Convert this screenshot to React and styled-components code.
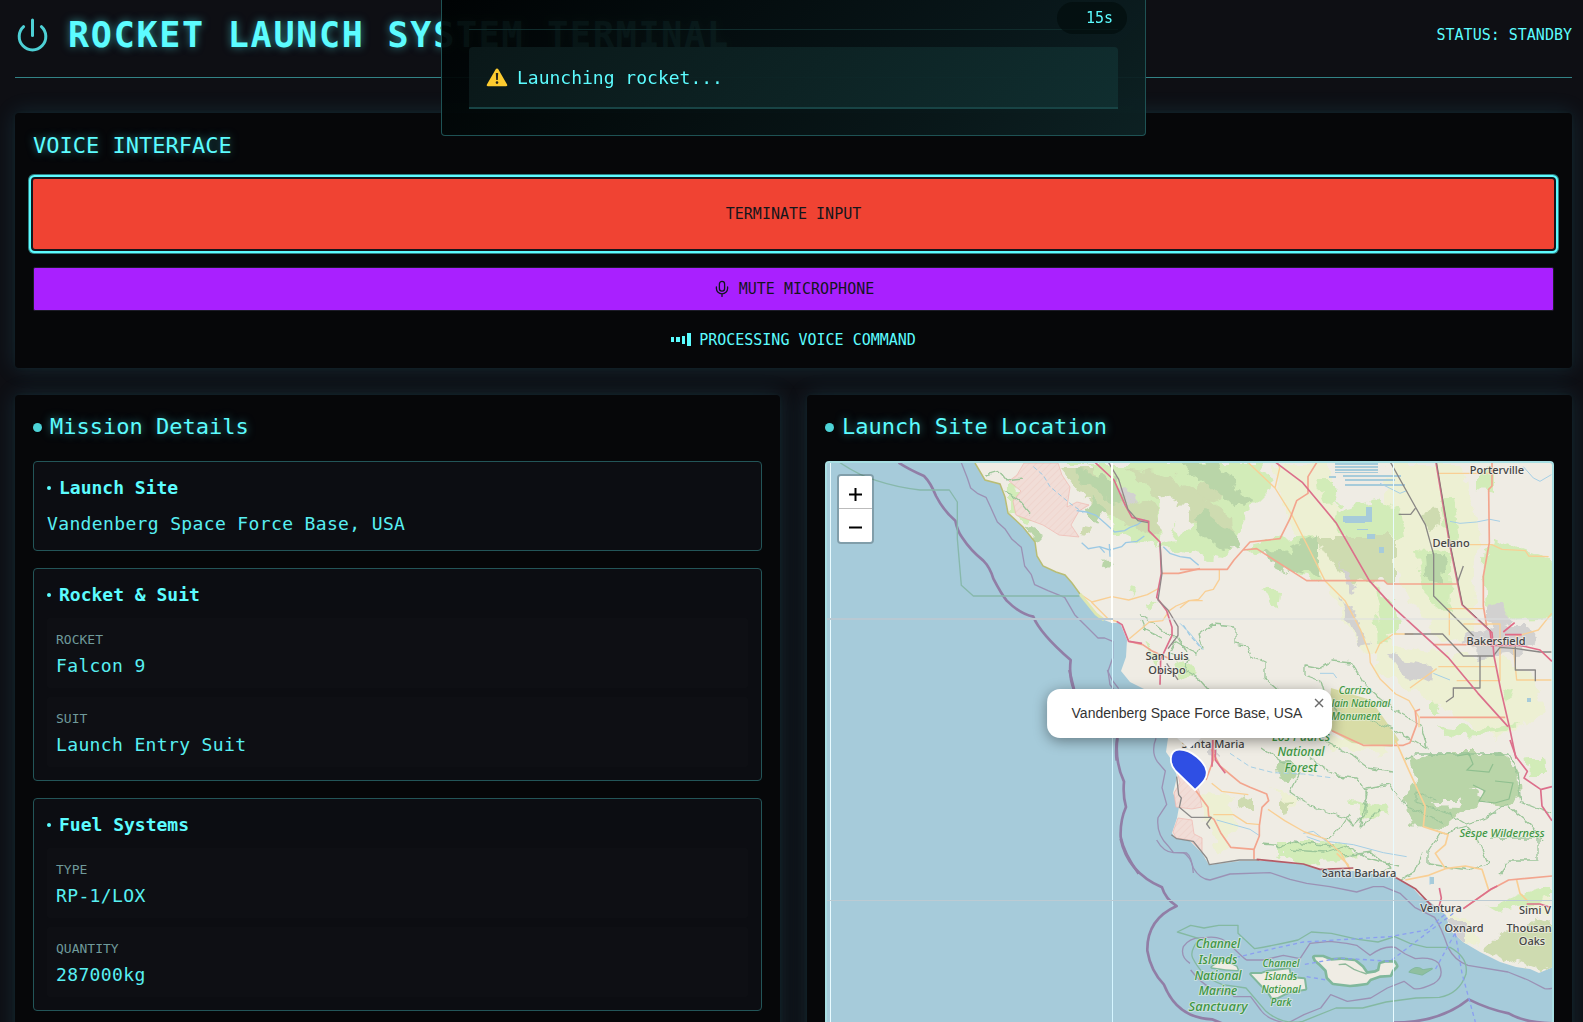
import React from "react";
import styled, { createGlobalStyle } from "styled-components";

const mono = '"DejaVu Sans Mono", "Liberation Mono", monospace';
const cyan = "#5cfcff";
const glow = "0 0 9px rgba(77, 230, 235, 0.55)";

const GlobalStyle = createGlobalStyle`
  * { box-sizing: border-box; }
  html, body { height: 100%; margin: 0; overflow: hidden; background: #0e0f14; }
  button { font: inherit; margin: 0; cursor: pointer; }
`;

const Page = styled.div`
  min-height: 100vh;
  padding: 9px 11px 27px 15px;
  background: #0e0f14;
  color: ${cyan};
  font-family: ${mono};
  font-size: 15px;
  line-height: 26px;
`;

const Header = styled.header`
  display: flex;
  align-items: center;
  justify-content: space-between;
  padding-bottom: 16px;
  margin-bottom: 35px;
  border-bottom: 1px solid #328386;
`;

const Brand = styled.div`
  display: flex;
  align-items: center;
  gap: 18px;
`;

const Title = styled.h1`
  margin: 0;
  font-size: 35px;
  line-height: 52px;
  letter-spacing: 0.05em;
  white-space: nowrap;
  text-shadow: ${glow};
`;

const Panel = styled.section`
  padding: 18px;
  min-width: 0;
  border-radius: 4px;
  background: #060709;
  box-shadow: 0 0 22px rgba(64, 180, 220, 0.16), 0 0 5px rgba(64, 220, 200, 0.05);
`;

const VoicePanel = styled(Panel)`
  display: flex;
  flex-direction: column;
  gap: 18px;
  margin-bottom: 27px;
`;

const Heading = styled.h2`
  display: flex;
  align-items: center;
  gap: 8px;
  margin: 0;
  font-size: 22px;
  font-weight: 400;
  line-height: ${(p) => (p.$tall ? "30px" : "28px")};
  text-shadow: ${glow};
`;

const Dot = styled.span`
  flex: none;
  width: ${(p) => p.$size}px;
  height: ${(p) => p.$size}px;
  border-radius: 50%;
  background: ${(p) => (p.$size > 5 ? "#4dd3d7" : cyan)};
`;

const ActionButton = styled.button`
  display: flex;
  align-items: center;
  justify-content: center;
  gap: 8px;
  width: 100%;
  color: #14161c;
  border-radius: 2px;
`;

const TerminateButton = styled(ActionButton)`
  height: 70px;
  border: 0;
  background: #f04333;
  box-shadow: 0 0 0 2px #14161c, 0 0 0 4px ${cyan}, 0 0 0 5px rgba(77, 211, 215, 0.6);
`;

const MuteButton = styled(ActionButton)`
  height: 44px;
  border: 1px solid #1d1c29;
  background: #a920ff;
`;

const VoiceStatus = styled.div`
  display: flex;
  align-items: center;
  justify-content: center;
  gap: 8px;
  padding-top: 1px;
  line-height: 20px;
`;

const Columns = styled.div`
  display: grid;
  grid-template-columns: minmax(0, 1fr) minmax(0, 1fr);
  gap: 27px;
`;

const Stack = styled.div`
  display: flex;
  flex-direction: column;
  gap: 17px;
  margin-top: 20px;
`;

const Card = styled.article`
  display: flex;
  flex-direction: column;
  padding: 13px;
  border: 1px solid #235558;
  border-radius: 4px;
  background: #0c0d12;
`;

const CardTitle = styled.h3`
  display: flex;
  align-items: center;
  gap: 8px;
  margin: 0 0 10px;
  font-size: 18px;
  line-height: 26px;
`;

const Value = styled.div`
  font-size: 18px;
  line-height: 26px;
  letter-spacing: 0.02em;
  color: #58eff2;
`;

const Fields = styled.div`
  display: flex;
  flex-direction: column;
  gap: 9px;
`;

const Field = styled.div`
  padding: 9px;
  border-radius: 2px;
  background: #0e0f14;
`;

const FieldLabel = styled.div`
  font-size: 13px;
  line-height: 26px;
  color: #6f9a9b;
`;

const Toast = styled.aside`
  position: fixed;
  z-index: 10;
  top: 0;
  left: 15px;
  right: 11px;
  width: min(705px, 100% - 26px);
  margin: 0 auto;
  padding: 0 27px 26px;
  border: 1px solid #1e5254;
  border-top: 0;
  border-radius: 0 0 4px 4px;
  background: linear-gradient(135deg, rgba(0, 3, 3, 0.95), rgba(9, 24, 26, 0.95) 72%, rgba(13, 34, 36, 0.96));
`;

const ToastTop = styled.div`
  height: 30px;
  margin-bottom: 17px;
  border-bottom: 1px solid #102c2c;
`;

const Timer = styled.div`
  position: absolute;
  top: 2px;
  right: 18px;
  width: 70px;
  padding: 3px 14px;
  border-radius: 16px;
  text-align: right;
  background: rgba(2, 12, 12, 0.65);
`;

const ToastMessage = styled.div`
  display: flex;
  align-items: center;
  gap: 9px;
  padding: 18px 17px 16px;
  border-bottom: 2px solid #184445;
  border-radius: 4px 4px 0 0;
  background: linear-gradient(135deg, rgba(12, 28, 29, 0.8), rgba(17, 50, 51, 0.8));
  font-size: 18px;
`;

const MapFrame = styled.div`
  position: relative;
  height: 620px;
  margin-top: 20px;
  overflow: hidden;
  border: 2px solid #a8dfe3;
  border-radius: 4px;
  background: #a6cbda;
`;

const MapSvg = styled.svg`
  display: block;
  width: 100%;
  height: 100%;
`;

const ZoomControl = styled.div`
  position: absolute;
  top: 11px;
  left: 10px;
  overflow: hidden;
  border: 2px solid rgba(0, 0, 0, 0.22);
  border-radius: 4px;
  background-clip: padding-box;
`;

const ZoomButton = styled.button`
  display: flex;
  align-items: center;
  justify-content: center;
  width: 33px;
  height: 33px;
  padding: 4px 0 0;
  border: 0;
  border-bottom: ${(p) => (p.$divided ? "1px solid #bbb" : "0")};
  background: #fff;
`;

const Callout = styled.div`
  position: absolute;
  top: 226px;
  left: 50%;
  display: flex;
  flex-direction: column;
  align-items: center;
  transform: translateX(-50%);
`;

const Bubble = styled.div`
  position: relative;
  padding: 0 30px 0 25px;
  border-radius: 13px;
  background: #fff;
  box-shadow: 0 3px 14px rgba(0, 0, 0, 0.4);
  color: #333;
  font-family: "Liberation Sans", Arial, sans-serif;
  font-size: 14px;
  line-height: 49px;
  white-space: nowrap;
`;

const CloseButton = styled.button`
  position: absolute;
  top: 1px;
  right: 0;
  display: flex;
  align-items: center;
  justify-content: center;
  width: 26px;
  height: 26px;
  padding: 0;
  border: 0;
  background: transparent;
`;

const Pointer = styled.svg`
  display: block;
`;

function PowerIcon() {
  return (
    <svg width="35" height="35" viewBox="0 0 35 35" fill="none" stroke="#4dd0d5" strokeWidth="3" strokeLinecap="round" aria-hidden="true">
      <path d="M17.5 2v15.5" />
      <path d="M8.6 8.700a13.300 13.300 0 1 0 17.800 0" />
    </svg>
  );
}

function MicIcon() {
  return (
    <svg width="18" height="18" viewBox="0 0 18 18" fill="none" stroke="currentColor" strokeWidth="1.3" strokeLinecap="round" aria-hidden="true">
      <rect x="6.4" y="1.4" width="5.2" height="9.8" rx="2.6" />
      <path d="M3.4 7v1.6a5.6 5.2 0 0 0 11.2 0V7M9 13.8v2.6" />
    </svg>
  );
}

function BarsIcon() {
  return (
    <svg width="20" height="14" viewBox="0 0 20 14" fill={cyan} aria-hidden="true">
      <path d="M0 4h3v5H0zM5 4h4v5H5zM11 3h3v8h-3zM16 0h4v13h-4z" />
    </svg>
  );
}

function WarningIcon() {
  return (
    <svg width="22" height="20" viewBox="0 0 22 20" role="img" aria-label="Warning">
      <path d="M11 .4c.6 0 1 .4 1.3.9l8.8 15.2c.5.9 0 1.7-1 1.7H1.900c-1 0-1.500-.8-1-1.700L9.700 1.300c.3-.5.7-.9 1.300-.9z" fill="#fccb2f" />
      <path d="M9.800 5h2.400l-.4 7h-1.600z" fill="#26231b" />
      <circle cx="11" cy="14.600" r="1.300" fill="#26231b" />
    </svg>
  );
}

/* Map drawing. Each sector is traced on a 3x grid from its own origin. */
const Sector = ({ x, y, children }) => <g transform={`translate(${x} ${y}) scale(0.33333)`}>{children}</g>;

const COAST =
  "M975 463 985 480 1000 484 1005 497 1008 513 1023 527 1035 542 1037 556 1043 566 1056 572 1065 575 1072 583 1080 594 1096 614 1104 620 1112 623 1120 623 1127 640 1126 657 1121 671 1130 682 1144 689 1160 700 1172 718 1168 738 1166 752 1173 762 1177 777 1173 793 1179 807 1177 818 1172 833 1175 838 1190 841 1202 853 1209 865 1240 861 1273 861 1290 863 1303 864 1320 869 1353 871 1395 877 1413 888 1420 896 1430 902 1446 915 1450 930 1463 942 1480 952 1500 962 1516 967 1530 969 1539 973 1553 967";

const TOWNS = [
  [1167, 660, "San Luis"], [1167, 674, "Obispo"], [1213, 748, "Santa Maria"], [1497, 474, "Porterville"],
  [1451, 547, "Delano"], [1496, 645, "Bakersfield"], [1359, 877, "Santa Barbara"], [1441, 912, "Ventura"],
  [1464, 932, "Oxnard"], [1535, 914, "Simi V"], [1529, 932, "Thousan"], [1532, 945, "Oaks"],
];

const PARKS = [
  [1355, 694, 10, "Carrizo"], [1358, 707, 10, "Plain National"], [1356, 720, 10, "Monument"],
  [1301, 741, 12, "Los Padres"], [1301, 756, 12, "National"], [1301, 772, 12, "Forest"],
  [1502, 837, 11, "Sespe Wilderness"],
  [1218, 948, 12, "Channel"], [1218, 964, 12, "Islands"], [1218, 980, 12, "National"], [1218, 995, 12, "Marine"], [1218, 1011, 13, "Sanctuary"],
  [1281, 967, 10, "Channel"], [1281, 980, 10, "Islands"], [1281, 993, 10, "National"], [1281, 1006, 10, "Park"],
];

function CoastMap() {
  return (
    <MapSvg viewBox="827 463 725 616" preserveAspectRatio="xMidYMin slice" role="img" aria-label="Map of the launch site">
      <defs>
        <filter id="rough" x="-5%" y="-5%" width="110%" height="110%">
          <feTurbulence type="fractalNoise" baseFrequency="0.07" numOctaves="3" seed="4" />
          <feDisplacementMap in="SourceGraphic" scale="17" xChannelSelector="R" yChannelSelector="G" />
        </filter>
        <filter id="edge">
          <feTurbulence type="fractalNoise" baseFrequency="0.13" numOctaves="2" seed="9" />
          <feDisplacementMap in="SourceGraphic" scale="6" xChannelSelector="R" yChannelSelector="G" />
        </filter>
        <pattern id="hatch" width="5" height="5" patternUnits="userSpaceOnUse" patternTransform="rotate(45)">
          <rect width="5" height="5" fill="#f1ddd7" />
          <path d="M0 0v5" stroke="#edcdc6" strokeWidth="1" />
        </pattern>
        <clipPath id="land"><path d={`${COAST}V463z`} /></clipPath>
      </defs>

      <rect x="827" y="463" width="725" height="616" fill="#a6cbda" />
      <path d={`${COAST}V463z`} fill="#efece4" />

      <g clipPath="url(#land)">
        <g filter="url(#rough)">
          {/* valley farmland */}
          <g fill="#edf0d3">
            <path d="M1270 463l60 0 10 60 30 50 20 38 0 50-30-12-30-60-40-70zM1390 463l70 0 20 70-10 100-30 10-40-60-20-70z" />
            <path d="M1375 645l60 10 60 0 40 20 10 40-50 25-50-30-70-40zM1440 595l30 0 5 40-25 5zM1320 738l60-5 10 22-50-5z" />
            <path d="M1200 790l30 5 5 30-15 30-15-40zM1270 790l30 10-8 10zM1520 900l30-5 0 20-30-5z" />
            <path d="M1450 915l18 2 10 30-18-8z" />
          </g>
          {/* hills and grassland */}
          <g fill="#d2ecb8">
            <path d="M1057 463l205 0 10 25-25 25-10 25-14 20-16-2-32-8-25-5-20-4-22-14-14-45-12-25-20-5-10-12z" />
            <path d="M1246 546l30-8 43-2 3 48-18-6-52-28z" />
            <path d="M1335 510l40-10 25 10 5 25-55 5-16-15zM1485 547l15-4 27 10 30 5v60l-35 2-36-14-3-30z" />
            <path d="M1318 480l16 0 6 24-16 4zM1374 590l20 12 4 26-14 6z" />
            <path d="M1262 590l18 3-2 14-10-6zM1480 470l14 2 0 18-14-2zM1374 610l16 30-14 5zM1528 758l16 0 2 16-16 0z" />
            <path d="M1350 800l40 10-20 12zM1280 842l60 0 20 15-60 6-20-8zM1490 907l30-12 30-8v10l-50 16z" />
            <path d="M1145 640l20 18-10 10zM1175 655l20 20-15 5zM1415 550l38 2-3 60-28-20zM1440 500l14 0 6 40-14 4z" />
            <path d="M1010 482l20 10 10 22-14 8-16-12zM1130 590l8 2-4 6zM1150 600l10 6-8 4z" />
            <path d="M1437 725l40 4 40-4-10 8-60 4zM1430 700l8 10-8 4zM1500 690l10 2-4 10z" />
          </g>
          {/* scrub */}
          <g fill="#cedbb0">
            <path d="M1060 468l30 0 30 28 35 10 10 30-25-5-45-22zM1180 500l20-18 20 2 5 10-30 20zM1317 537l78 0 0 45-46-2-20-22z" />
            <path d="M1126 468l45 8 60 42 2 18-50-14zM1240 795l10 3 0 14-12-8zM1280 803l12-2 0 12-12 2zM1422 512l14-3 4 16-12 4z" />
            <path d="M1484 950l20-18 20-5 30-5v42l-14 8-30-10zM1084 525l10 2-2 8-10-2z" />
          </g>
          {/* forest */}
          <g fill="#b9d5a8">
            <path d="M1075 468l30 6 22 24-14 4-30-18zM1180 464l40 0 15 25 20 15-20 4-30-26zM1192 518l15-6 20 16 12 20-15 2-27-18z" />
            <path d="M1092 500l12 10-6 10-12-8zM1290 545l30-10 0 42-26-8zM1262 555l30-2 12 22-30-8zM1422 555l25 0-4 28-20-8z" />
            <path d="M1410 758l30-6 60 0 18 14 2 30-18 12-15-6-25 8-22 20-30-4-8-30 12-14zM1280 765l18 0-8 18-16-8z" />
            <path d="M1482 790l36-6 4 14-30 8zM1022 524l22 12-8 8zM1100 560l10 4-4 4z" />
          </g>
          <g fill="#efece4">
            <path d="M1430 800l34 0-8 6-24-1zM1470 790l14 0-3 6zM1160 492l20 8-8 40-14 4zM1174 510l14-4 2 24-12 8z" />
          </g>
          {/* built up areas */}
          <g fill="#d2d1d0">
            <path d="M1487 607l14-4 14 20-16 6-12-8zM1465 637l30-10 34 0 8 12-16 14-44 6zM1340 600l12 6 20 40-12 2-10-24z" />
            <path d="M1390 655l42 10-2 16-26-6zM1338 560l20 28-6 3zM1452 920l12 0 0 20-10-4zM1120 492l7-4 8 12-7 4zM1208 742l8 0 0 14-8-4z" />
          </g>
        </g>
        <path d="M1331 688l40 12 28 40-7 7-40-4-24-14z" fill="#d8dca6" />
      </g>

      {/* restricted zones */}
      <g fill="url(#hatch)" stroke="#efb8b0" strokeWidth="0.7">
        <path d="M1024 463h34l4 12 8 12-3 20 10-5 12 3-10 6-8 14 8 12-20-2-16-10-27-10-3-14 8-10-12-10 8-6z" />
        <path d="M1175 763l14 6 10 22 3 16-10 2-16-2-2-14 6-10zM1178 818l14 2 2 14 8 4v14l-12-12-14-2-3-6z" />
      </g>

      {/* lake bed and reservoirs */}
      <g fill="#a6cbda">
        <path d="M1335 463h43v2h-43zM1335 466h43v2h-43zM1335 469h43v2h-43zM1335 472h43v1h-43zM1343 475h58v2h-58zM1329 476h7v2h-7zM1345 479h50v2h-50zM1345 484h60v2h-60zM1343 516h28v6h-28zM1345 522h20v1h-20zM1366 507h6v15h-6zM1357 529h11v1h-11zM1367 534h8v5h-8zM1379 547h5v6h-5zM1430 877h4v7h-4zM1527 698h4v4h-4z" />
      </g>

      {/* trails and park limits */}
      <g filter="url(#edge)" fill="none" stroke="#9cc69a" strokeWidth="1.3" strokeLinejoin="round">
        <path d="M1213 624l22 2 0 18 12 2 4 10 14 6 0 16 14 12-8 6-60-3-12-14-14-8 4-10-20-8 6-12 20 12 8-6-4-12z" />
        <path d="M1305 665l16 3 12-7 18 2 14 22 28 24 28 16 6 24-24-14-10-6-24-10-28-4-16-20-4-14-16-6z" />
        <path d="M1262 748l20 14 10 0M1300 772l-10 20 20 14 36 12 8 8 12-12 0-26 24-4 14 20 40 20M1310 758l26 18 20 2 12 16-8 34 20-20" />
        <path d="M1322 740l28 14 18 14 24 4M1325 842l16-16 8-12" />
        <path d="M1140 614l12 8 14 12 12 4 8 14M1142 620l4 10 16 8" />
        <path d="M1263 844l20 2 10-4 40 4 12 10 26-4 20 16-14 8M1290 850l34 2 20-6 24 12 30 8" />
        <path d="M1405 760l10-6 94 0 8 18 4 30 30 12M1436 800l-20-8 0 10 30 10 20 12 20-6 20-14 24 20 12 16" />
        <path d="M1440 834l26-8 12 14 10 24-20 6-40-6 0-12zM1490 838l48 0 0 22-28 0-10 14M1400 880l14-8 8-20" />
        <path d="M985 475l14-4 8 10 16-2M1004 490l16 12 10 12" />
      </g>
      <g fill="none" stroke="#6f9f8d" strokeWidth="1.2">
        <path d="M1457 756l12-2 4 10-6 6 22 2 4-8M1473 785l12 6-6 10 16 2 14-4 4-16-18-2" stroke="#8fbf8f" />
      </g>

      {/* streams */}
      <Sector x={820} y={460}>
        <g fill="none" stroke="#9cc9e4" strokeWidth="4">
          <path d="M770 152l30 4 28 10 30 26 26 24 30-4 16-10 22-8 22-16M785 248l20 18 34-6 30 10 36-10 12-12 34-4 22-16M868 252l2 38M840 262l14 16M1030 260l20 20 30 10 30 4 26 22" />
          <path d="M640 20l30 26 20 34 60 50 40 28" strokeDasharray="14 8" strokeWidth="3" />
          <path d="M1090 496l20 30 30 34" strokeDasharray="14 8" />
        </g>
      </Sector>
      <Sector x={1180} y={740}>
        <g fill="none" stroke="#a5cfe6" strokeWidth="3">
          <path d="M150 40l60 40 70 18 90 4 90 12" strokeDasharray="16 9" />
          <path d="M370 280l30-6 40 30 80 10 90 24 70 12M380 290l40 14M110 240l50 14 50 14 30 20M750 410v24" />
        </g>
      </Sector>
      <Sector x={1180} y={460}>
        <g fill="none" stroke="#a5cfe6" strokeWidth="3">
          <path d="M810 184l30 6 50-4 40-8 30 6M0 490l30 30 40 50M1030 20l30 34 20 10 34-20M760 640l50 20M420 640h40l10 14M600 70l60 30 20-8" />
        </g>
      </Sector>

      {/* roads */}
      <Sector x={1180} y={460}>
        <g fill="none" strokeLinejoin="round">
          <g stroke="#f9cf94" strokeWidth="4">
            <path d="M205 8l80 76 50 80 50 98 50 100 60 60 46 86 28 74 2 26 30 50 46 44 40 20 30 50v30M285 84l14-60-6-16M586 580l14-30 40-28h60M775 40h160M866 254h70l30 14 70 4 10 16 60 2M800 446h112M850 492h110v170h-130M775 620h170M808 446v80M1115 460l-40 50-70 20M1000 560l10 100h104M690 684l80-58M0 444l26-22 30-4 20-24 24-6 18-30v-30" />
          </g>
          <g stroke="#f3a58e" strokeWidth="5">
            <path d="M0 328h142l20-28 48-54 90-10 30-60 20-54 34-22V50l26-42M190 270l40-4 150 96h232l10 10h210M936 8v70l-10 10 2 160-18 100v90l10 60M760 554h180M720 772h256M456 812l94 44h120l20-8 20-54-4-40 14-6" />
          </g>
          <g stroke="#898785" strokeWidth="4">
            <path d="M632 8l76 136 28 50 25 90v124l120 120M656 163h36l14-18M674 522h114l62 66h90l20-26 50 4 70 10h34M900 588v96h-80v26l-22 16M1006 560v70h60v34M850 318l-18 50" />
          </g>
          <g stroke="#dc6f8b" strokeWidth="5">
            <path d="M288 8l80 60 100 120 100 174 76 84 160 146 90 108 90 100M768 8l42 250 36 176 90 84 6 70 20 100 26 112 20 96" />
            <path d="M930 512l6 48M970 516l34-28M975 524h50M930 556h90l60 14 36 34" stroke="#e26985" />
          </g>
          <path d="M770 8l42 250 36 176 84 78" stroke="#8f7678" strokeWidth="3" />
        </g>
      </Sector>
      <Sector x={820} y={460}>
        <g fill="none" strokeLinejoin="round">
          <path d="M780 402l36 24 60-16 50 10 56-16 36-20M814 426l50 50 30 10M928 536l60-50 40-4 20-30 20-14 40-16h40" stroke="#f9cf94" strokeWidth="4" />
          <path d="M1026 340h50l64-14M928 544l40 10 30 20 46 20" stroke="#f3a58e" strokeWidth="5" />
          <path d="M826 8l56 52 34 76 20 36 50 12v28l34 34 4 94-14 72 30 40 16 50v24l-34 72-2 76M890 484l16 10 20 50 40 6" stroke="#dc6f8b" strokeWidth="5" />
          <path d="M866 8l30 50 28 90 30 34 30 6M1020 250l6 90-12 80 30 30 30 50v26l-30 40M1040 610l34 50" stroke="#918789" strokeWidth="4" />
        </g>
      </Sector>
      <Sector x={1030} y={670}>
        <g fill="none" strokeLinejoin="round">
          <path d="M545 340l30 24 80 10M550 434h60l40 26 40 4M714 418l50 34 60 34 60 20 50 44 20 40" stroke="#f9cf94" strokeWidth="4" />
          <path d="M498 362l36 50 2 26 16 10 20 40 30 44 70 6 16-40v-30l8-56 20-20-6-20-50-20-30-14-60-50-26-50M672 540v28M528 330l22-60v-60" stroke="#f3a58e" strokeWidth="5" />
          <path d="M548 210l-2 80M556 240v30l30 40" stroke="#dc6f8b" strokeWidth="5" />
          <path d="M440 320l6 54 8 10-6 28 36 30h60l-14 20 10 14M424 494l16 12 50 8 40 50 8 20 90-14h60" stroke="#8c8b8a" strokeWidth="4" />
        </g>
      </Sector>
      <Sector x={1180} y={740}>
        <g fill="none" strokeLinejoin="round">
          <path d="M646 0l40 90 50 110-6 60 74 24-8 30-30 26 30 46 60-8 50 10 20 62M796 386l-50 20-70 14M470 340l34 34 6 18M1010 420l10 40 24 24" stroke="#f9cf94" strokeWidth="5" />
          <path d="M850 506l80-56 56-30 130-12" stroke="#f3a58e" strokeWidth="5" />
          <path d="M990 0l18 50 34 44-10 20 50 34 4 50 30 44M1084 148l32-8M778 444l6 30-8 30M850 506l82-58 20-10M1040 492h40l30 10" stroke="#dc6f8b" strokeWidth="5" />
          <path d="M230 358l60 6 80 8 50 16 100-4M646 412l60 34 48 50" stroke="#b55b66" strokeWidth="5" />
        </g>
      </Sector>

      {/* coastline tint */}
      <path d="M975 463l10 17 15 4 5 13 3 16 15 14 12 15 2 14 6 10 13 6 9 3 7 8 8 11" fill="none" stroke="#b9bd75" strokeWidth="1.5" />
      <path d="M1080 594l16 20 8 6" fill="none" stroke="#dfe7b0" strokeWidth="3" />

      {/* maritime limits */}
      <Sector x={820} y={460}>
        <g fill="none" strokeLinejoin="round">
          <path d="M236 8q30 20 76 40 20 20 36 60 24 46 58 74 6 30 20 50 26 40 64 70 20 20 30 54 24 46 40 66 40 40 80 48 20 50 112 130-6 50 10 90M892 832q-6 40-2 70" stroke="#917ea6" strokeWidth="8" />
          <path d="M424 8l18 46 10 30 20 16 26 12 14 30 20 44 24 22 20 30 28 24 10 56 20 26 10 30 40 18 50 20 30 52 40 40 30 30h20l24 10 0 50-14 40 6 40 26 34" stroke="#9b92b5" strokeWidth="4" />
          <path d="M60 8q60 40 110 54 60 20 130 28h88l24 36v110l12 140 36 32h318" stroke="#87b8ab" strokeWidth="4" />
        </g>
      </Sector>
      <Sector x={1030} y={670}>
        <g fill="none">
          <path d="M118 0l14 58M262 205q-8 70 20 130-4 40 6 76-18 40-16 90 10 50 54 110" stroke="#917ea6" strokeWidth="8" />
          <path d="M232 0l14 30 20 26M378 205q-16 40 4 70l24 28-10 50 14 50-26 40q-6 50 30 84l16 20 40 2q16 10 20 60" stroke="#9b92b5" strokeWidth="4" />
        </g>
      </Sector>
      <Sector x={1100} y={840}>
        <g fill="none" strokeLinejoin="round">
          <path d="M62 -4q20 100 124 146 10 34 44 56-90 40-88 134 10 60 50 102 40 100 144 104l40 16M880 548q140 0 226-70 60 30 120 42 50 30 140 30" stroke="#917ea6" strokeWidth="8" />
          <path d="M170 0q20 36 50 38h30q20 10 30 46 20 34 50 36l60-18 120-4 60 20 50 12 70 10 80 16 50-16h30l50 20 44 42 60 30q20 30 40 90 20 40 60 54l120 20 60 24 50 26q30 4 50-20" stroke="#9b92b5" strokeWidth="4" />
          <path d="M270 370q-30-20-20-50 20-30 60-26 50-10 80 20 40 40 50 46h50l60-14 50 10 30-46 60-6 50 6 30 6 40 30q40-30 76-24l30 20 30 14q50-6 70 14 20 40-14 60-40 20-60 16l-30-22-50 20-50 30-70 10-50-20-30 40-50 20-50 26q-60-10-80-40l-30-40h-50q-10-20-60-20-40-20-70-60" stroke="#9b92b5" strokeWidth="4" />
          <path d="M232 276l40-20 40 8 44-8h58v24l50 46q60-10 130-26l40-24 60 4 80 18 60 8 50-16 46 20 50 12h70q56 30 48 80-20 60-80 70l-70 2-90 12-70 18h-80l-100 40q-60 12-110-30l-60-70-70-10q-60-20-90-80-10-20 20-58z" stroke="#84b9a2" strokeWidth="4" />
        </g>
        <g stroke="#80b89c" strokeLinejoin="round" paintOrder="stroke">
          <path d="M644 352l24 0 26 10 30-2 40 4 22 18 14 20 26-4 12-6 4-20 14-4h26l6 10-12 12-6 14-30 2-30 10-10 12-30 4-20 2-50-6-16-16-4-22-20-20-12-10z" fill="#efece4" strokeWidth="16" />
          <path d="M454 402l30 0 16-6 66-8 6 26 40 4 4 28-40 6-20 8-24 12-16 0-10-16-20-20z" fill="#efece4" strokeWidth="12" />
          <path d="M335 382l20-14 20-4 34 16 4 10-36-2z" fill="#efece4" strokeWidth="8" />
          <path d="M928 396q20-22 40-6l28-4-30 18z" fill="#8fbfa0" strokeWidth="5" />
        </g>
        <path d="M716 374l20-2 26 16 20 8 18 6" fill="none" stroke="#8fb99a" strokeWidth="4" />
        <g fill="none" stroke="#8b9ff0" strokeWidth="4" strokeDasharray="12 10">
          <path d="M1050 210l-70 60-110 20-260 16-90 20-110 26M1060 220l-80 60-110 84-150-10-110 20M1065 280l-60 110M1066 280l20 120 40 146M620 410l60 10" />
        </g>
      </Sector>

      {/* tile seams */}
      <g>
        <path d="M830.5 463v616M1393.500 463v616" stroke="#e9fbff" strokeWidth="1" />
        <path d="M1112.500 463V1079" stroke="#d4f5ff" strokeWidth="1" />
        <path d="M1112 463v160" stroke="#fffffb" strokeWidth="2" />
        <path d="M827 619h286" stroke="#b9c9d3" strokeWidth="2" />
        <path d="M1113 619h440" stroke="#dcdfe0" strokeWidth="1" />
        <path d="M827 900.500h726" stroke="#bccbd3" strokeWidth="1" />
      </g>

      <g fontFamily='"Noto Sans", "Open Sans", sans-serif' textAnchor="middle" strokeLinejoin="round" paintOrder="stroke">
        <g fontSize="11" fontWeight="500" fill="#444" stroke="#f5f3ee" strokeOpacity="0.6" strokeWidth="2">
          {TOWNS.map(([x, y, name]) => <text key={name} x={x} y={y}>{name}</text>)}
        </g>
        <g fontStyle="italic" fontWeight="500" fill="#3f9643" stroke="#e9f3e3" strokeOpacity="0.55" strokeWidth="2">
          {PARKS.map(([x, y, size, name]) => <text key={`${name}${x}${y}`} x={x} y={y} fontSize={size}>{name}</text>)}
        </g>
      </g>
    </MapSvg>
  );
}

function SiteMap() {
  return (
    <MapFrame>
      <CoastMap />
      <ZoomControl>
        <ZoomButton $divided aria-label="Zoom in">
          <svg width="13" height="13" viewBox="0 0 13 13" stroke="#000" strokeWidth="2"><path d="M6.500 0v13M0 6.500h13" /></svg>
        </ZoomButton>
        <ZoomButton aria-label="Zoom out">
          <svg width="13" height="13" viewBox="0 0 13 13" stroke="#000" strokeWidth="2"><path d="M0 6.500h13" /></svg>
        </ZoomButton>
      </ZoomControl>
      <Callout>
        <Bubble>
          Vandenberg Space Force Base, USA
          <CloseButton aria-label="Close popup">
            <svg width="10" height="10" viewBox="0 0 10 10" stroke="#6b6b6b" strokeWidth="1.400"><path d="M1 1l8 8M9 1l-8 8" /></svg>
          </CloseButton>
        </Bubble>
        <Pointer width="44" height="54" viewBox="0 0 44 54" aria-hidden="true">
          <path d="M10 0h24L22 11z" fill="#fff" />
          <path d="M28 52 8.500 33C2 26 1.500 12 12 11.500 24 11 38 24 39.500 33c1 6-2 10-11.500 19z" fill="#2f4fe4" stroke="#fff" strokeWidth="1.800" strokeLinejoin="round" />
        </Pointer>
      </Callout>
    </MapFrame>
  );
}

const SYSTEMS = [
  { title: "Rocket & Suit", fields: [["ROCKET", "Falcon 9"], ["SUIT", "Launch Entry Suit"]] },
  { title: "Fuel Systems", fields: [["TYPE", "RP-1/LOX"], ["QUANTITY", "287000kg"]] },
];

export default function App() {
  return (
    <>
      <GlobalStyle />
      <Page>
        <Header>
          <Brand>
            <PowerIcon />
            <Title>ROCKET LAUNCH SYSTEM TERMINAL</Title>
          </Brand>
          <span>STATUS: STANDBY</span>
        </Header>

        <Toast role="status">
          <ToastTop />
          <Timer>15s</Timer>
          <ToastMessage>
            <WarningIcon />
            Launching rocket...
          </ToastMessage>
        </Toast>

        <VoicePanel>
          <Heading $tall>VOICE INTERFACE</Heading>
          <TerminateButton>TERMINATE INPUT</TerminateButton>
          <MuteButton>
            <MicIcon />
            MUTE MICROPHONE
          </MuteButton>
          <VoiceStatus>
            <BarsIcon />
            PROCESSING VOICE COMMAND
          </VoiceStatus>
        </VoicePanel>

        <Columns>
          <Panel>
            <Heading>
              <Dot $size={9} />
              Mission Details
            </Heading>
            <Stack>
              <Card>
                <CardTitle><Dot $size={4} />Launch Site</CardTitle>
                <Value>Vandenberg Space Force Base, USA</Value>
              </Card>
              {SYSTEMS.map((system) => (
                <Card key={system.title}>
                  <CardTitle><Dot $size={4} />{system.title}</CardTitle>
                  <Fields>
                    {system.fields.map(([label, value]) => (
                      <Field key={label}>
                        <FieldLabel>{label}</FieldLabel>
                        <Value>{value}</Value>
                      </Field>
                    ))}
                  </Fields>
                </Card>
              ))}
            </Stack>
          </Panel>

          <Panel>
            <Heading>
              <Dot $size={9} />
              Launch Site Location
            </Heading>
            <SiteMap />
          </Panel>
        </Columns>
      </Page>
    </>
  );
}
